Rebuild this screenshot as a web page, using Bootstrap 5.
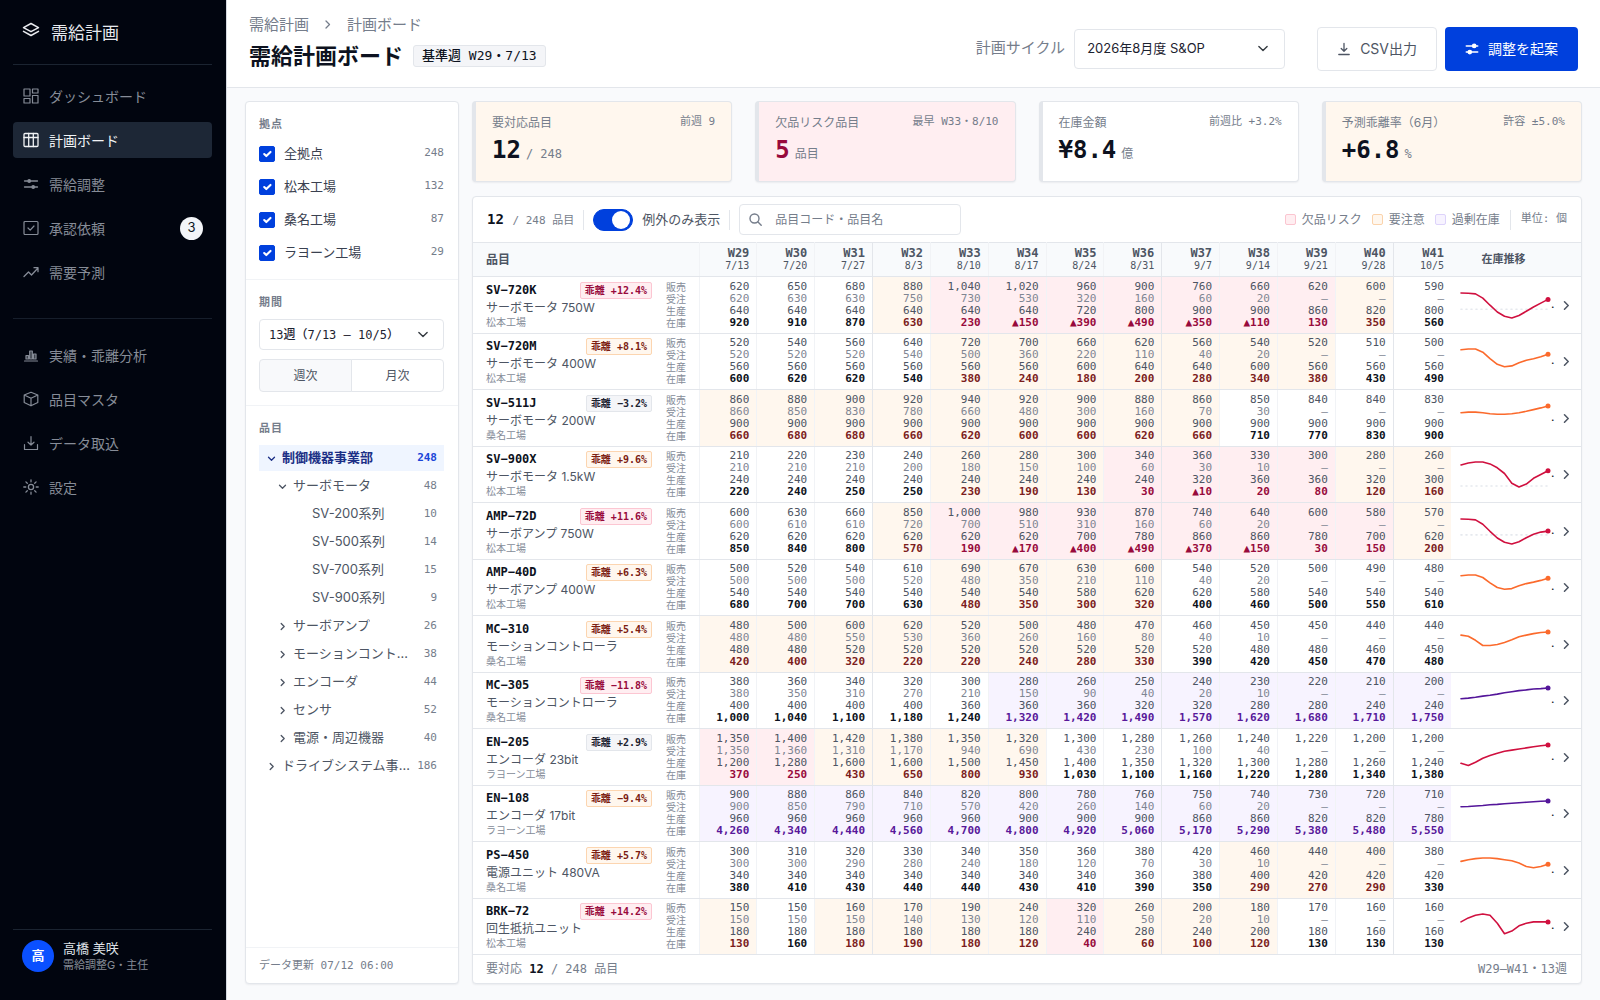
<!DOCTYPE html>
<html lang="ja">
<head>
    <meta charset="UTF-8">
    <meta name="viewport" content="width=device-width, initial-scale=1.0">
    <title>需給計画ボード</title>
    <link href="https://cdn.jsdelivr.net/npm/bootstrap@5.3.0/dist/css/bootstrap.min.css" rel="stylesheet">
    <style>
        :root {
            --line: #e3e6eb;
            --line-soft: #f1f3f6;
            --ink: #0d1220;
            --text: #4d5563;
            --muted: #757d8b;
            --blue: #0040dd;
            --risk-bg: #ffeef1;
            --warn-bg: #fff7ee;
            --over-bg: #f7f3ff;
            --sans: Inter, "Noto Sans CJK JP", sans-serif;
            --mono: "DejaVu Sans Mono", "Noto Sans CJK JP", monospace;
        }
        body { font-family: var(--sans); font-size: 13px; color: var(--text); background: #f9fafc; }
        svg { fill: none; stroke: currentColor; stroke-linecap: round; stroke-linejoin: round; flex: none; }
        .mono { font-family: var(--mono); }
        .fs-11 { font-size: 11px; }
        .fs-12 { font-size: 12px; }
        .muted { color: var(--muted); }
        .ink { color: var(--ink); }
        .panel { background: #fff; border: 1px solid var(--line); border-radius: 4px; box-shadow: 0 1px 2px rgba(15, 23, 42, .06); }

        /* sidebar */
        .side { width: 227px; background: #01050f; border-right: 1px solid #d5d9e0; padding: 0 14px 0 13px; color: #868c97; }
        .brand { height: 65px; padding: 4px 10px 0 9px; gap: 11px; font-size: 17px; color: #e8eaee; border-bottom: 1px solid #1b2431; }
        .brand svg { margin-bottom: 6px; }
        .side-nav { gap: 8px; padding: 13px 0 28px; }
        .side-nav + .side-nav { border-top: 1px solid #161e2b; padding-top: 18px; }
        .side-nav .nav-link { height: 36px; padding: 0 9px 0 10px; gap: 10px; font-size: 14px; color: inherit; border-radius: 4px; }
        .side-nav .nav-link.active { background: #1d2736; color: #f1f3f5; }
        .pending { width: 23px; height: 23px; font-size: 13px; background: #f3f5f8; color: #10151f; }
        .user { border-top: 1px solid #1b2431; padding: 9px 8px 27px 9px; gap: 9px; }
        .avatar { width: 32px; height: 32px; font-weight: 700; background: #0a50ff; color: #fff; }
        .user-name { line-height: 18px; color: #dfe2e7; }
        .user-role { font-size: 11px; line-height: 16px; }

        /* top bar */
        .topbar { height: 88px; background: #fff; border-bottom: 1px solid var(--line); padding: 10px 22px 0; }
        .page-title { padding-bottom: 12px; }
        .crumbs { font-size: 15px; line-height: 22px; gap: 16px; color: var(--muted); }
        .crumbs a { color: inherit; text-decoration: none; }
        .topbar h1 { font-size: 22px; line-height: 32px; font-weight: 700; color: var(--ink); }
        .title-row { gap: 10px; }
        .base-week { height: 22px; padding: 0 8px; font-size: 13px; font-weight: 500; line-height: 20px; background: #f4f5f8; border: 1px solid var(--line); border-radius: 3px; color: var(--ink); }
        .cycle-label { font-size: 15px; color: var(--muted); margin-right: 9px; }
        .form-select { border-color: var(--line); border-radius: 4px; color: #1c2230; background-size: 14px 11px; }
        .cycle { width: 211px; height: 40px; padding: 0 32px 0 12px; font-size: 13px; background-position: right 14px center; }
        .topbar .btn { height: 44px; padding: 0 19px; font-size: 14px; border-radius: 4px; gap: 9px; }
        .btn-export { background: #fff; border-color: var(--line); color: var(--text); }
        .btn-draft, .btn-draft:hover { background: var(--blue); color: #fff; }

        /* filters */
        .work { padding: 13px 18px 16px; gap: 13px; min-height: 0; }
        .filters { width: 214px; }
        .filters section { padding: 12px 14px 13px 13px; border-bottom: 1px solid var(--line-soft); }
        .filters section:first-child { padding-bottom: 10px; }
        .filters h2 { font-size: 11px; line-height: 20px; font-weight: 600; letter-spacing: 1px; color: var(--muted); margin: 0; }
        .site-list { margin-top: 3px; }
        .site { height: 33px; gap: 9px; }
        .form-check-input:checked { background-color: var(--blue); border-color: var(--blue); }
        .site .form-check-input { width: 16px; height: 16px; margin: 0; border-radius: 2px; float: none; }
        .site label { color: #3a4150; }
        .period { height: 31px; padding: 0 26px 0 9px; margin: 7px 0 9px; font-size: 12px; font-weight: 500; background-position: right 13px center; }
        .grain .btn { height: 33px; padding: 0; font-size: 12px; line-height: 31px; border-color: var(--line); border-radius: 4px; color: var(--text); background: #fff; }
        .grain .btn-check:checked + .btn { background: #f8f9fb; border-color: var(--line); color: var(--text); }
        .tree { gap: 2px; margin-top: 7px; }
        .tree button { height: 26px; padding: 0 7px 0 8px; border: 0; background: none; color: var(--text); text-align: left; }
        .tree .level-1 { padding-left: 19px; }
        .tree .level-2 { padding-left: 53px; }
        .tree .chosen { background: #eff5ff; color: #1b2f86; font-weight: 700; }
        .tree .chosen .tally { color: #1a45d8; }
        .tree svg { margin-right: 6px; }
        .tally { font-family: var(--mono); font-size: 11px; color: var(--muted); margin-left: 5px; }
        .updated { height: 35px; padding: 0 13px; line-height: 35px; }

        /* summary tiles */
        .board-side { gap: 14px; }
        .tiles { gap: 23px; }
        .tile { flex: 1; height: 81px; padding: 12px 16px 0; border-left: 4px solid var(--line); }
        .tile-value { font-family: var(--mono); font-size: 24px; line-height: 36px; font-weight: 700; color: var(--ink); }
        .tile-unit { font-size: 12px; font-weight: 400; color: var(--muted); margin-left: 5px; }
        .tone-warn { background: var(--warn-bg); }
        .tone-risk { background: var(--risk-bg); }
        .tone-risk .tile-value { color: #980a3c; }
        .tone-risk .tile-unit { color: var(--muted); }

        /* board */
        .tools { height: 45px; padding: 0 14px; }
        .tools .mono, .tools .search, .tools .form-switch, .rule { flex: none; }
        .rule { width: 1px; height: 20px; background: var(--line); }
        .tool-row { gap: 9px; }
        .total { font-size: 14px; font-weight: 700; color: var(--ink); margin-right: 2px; }
        .tools .form-switch { padding: 0; min-height: 0; gap: 9px; }
        .tools .form-switch .form-check-input { width: 40px; height: 22px; margin: 0; border-radius: 11px; float: none; background-size: 24px; background-position: right -1px center; }
        .tools .form-switch .form-check-input:not(:checked) { background-position: left -1px center; }
        .search { width: 222px; height: 31px; border: 1px solid var(--line); border-radius: 4px; padding: 0 9px; gap: 9px; }
        .search input { border: 0; padding: 0 4px; font-size: 12px; min-height: 0; background: none; box-shadow: none; }
        .search input::placeholder { color: var(--muted); }
        .legend-row { gap: 10px; }
        .legend-key { gap: 6px; }
        .swatch { width: 11px; height: 11px; border-radius: 2px; border: 1px solid; }
        .swatch-risk { background: var(--risk-bg); border-color: #fbc5d0; }
        .swatch-warn { background: var(--warn-bg); border-color: #fbd3ab; }
        .swatch-over { background: var(--over-bg); border-color: #ddd3fb; }
        .board-body { min-height: 0; }
        .plan-grid { table-layout: fixed; height: 100%; border-top: 1px solid var(--line); }
        .plan-grid th, .plan-grid td { padding: 0; vertical-align: middle; border-bottom: 1px solid var(--line); color: var(--text); }
        .plan-grid thead th { height: 34px; background: #f8fafc; font-weight: 600; }
        .col-item { width: 187px; }
        .col-kind { width: 39px; }
        .col-trend { width: 105px; }
        .col-open { width: 25px; }
        .plan-grid .week { padding-right: 7px; text-align: right; font-family: var(--mono); font-size: 11px; line-height: 12px; border-left: 1px solid var(--line-soft); }
        .plan-grid .month { border-left-color: var(--line); }
        .plan-grid thead .week { font-size: 12px; font-weight: 700; line-height: 13px; }
        .week small { display: block; font-size: 10px; font-weight: 400; line-height: 12px; }
        .plan-grid .item { padding: 0 8px 0 13px; font-weight: 400; }
        .code { font-size: 12px; line-height: 17px; font-weight: 700; color: var(--ink); }
        .item-name { font-size: 12px; line-height: 17px; }
        .item-site { font-size: 10px; line-height: 12px; color: #858c99; }
        .gap-tag { font-family: var(--mono); font-size: 10px; line-height: 15px; font-weight: 700; padding: 0 4px; border: 1px solid var(--line); border-radius: 2px; background: #f4f5f8; color: #1c2230; }
        .gap-risk { background: var(--risk-bg); border-color: #fcc6d2; color: #980a3c; }
        .gap-warn { background: var(--warn-bg); border-color: #fcd5b0; color: #7c1d12; }
        .plan-grid .kind { padding-left: 6px; font-size: 10px; line-height: 12px; color: #858c99; }
        .plan-grid td.risk { background: var(--risk-bg); }
        .plan-grid td.warn { background: var(--warn-bg); }
        .plan-grid td.over { background: var(--over-bg); }
        .orders { color: #7f8693; }
        .stock { font-weight: 700; color: var(--ink); }
        .risk .stock { color: #980a3c; }
        .warn .stock { color: #7c1d1d; }
        .over .stock { color: #58189a; }
        .plan-grid .trend { padding-left: 9px; color: var(--ink); white-space: nowrap; font-size: 12px; }
        .trend-risk { color: #d0103f; }
        .trend-warn { color: #fb6a2c; }
        .trend-over { color: #54169a; }
        .open-row { padding: 0 6px; border: 0; background: none; color: var(--text); line-height: 1; }
        .board-foot { height: 28px; padding: 0 14px 0 13px; }
    </style>
</head>
<body class="d-flex vh-100">

<aside class="side d-flex flex-column flex-shrink-0">
    <div class="brand d-flex align-items-center">
        <svg width="18" height="18" viewBox="0 0 18 18" stroke-width="1.5"><path d="M9 1.5 1.5 5.6 9 9.7l7.500-4.100zM1.500 9.300 9 13.500l7.500-4.200"/></svg>
        <span>需給計画</span>
    </div>
    <nav class="side-nav nav flex-column">
        <a class="nav-link d-flex align-items-center" href="#">
            <svg width="16" height="16" viewBox="0 0 16 16" stroke-width="1.2"><path d="M1 1h6v7H1zM9.500 1H15v4H9.500zM1 10.500h6V15H1zM9.500 7.500H15V15H9.500z"/></svg>
            ダッシュボード
        </a>
        <a class="nav-link active d-flex align-items-center" href="#" aria-current="page">
            <svg width="16" height="16" viewBox="0 0 16 16" stroke-width="1.300"><rect x="1" y="1.500" width="14" height="13" rx="1"/><path d="M1 5.500h14M5.700 1.500v13M10.300 1.500v13"/></svg>
            計画ボード
        </a>
        <a class="nav-link d-flex align-items-center" href="#">
            <svg width="16" height="16" viewBox="0 0 16 16" stroke-width="1.300"><path d="M1.500 5h3M8 5h6.500M1.500 11h7M12 11h2.500"/><circle cx="6.200" cy="5" r="1.300" fill="currentColor"/><circle cx="10.200" cy="11" r="1.300" fill="currentColor"/></svg>
            需給調整
        </a>
        <a class="nav-link d-flex align-items-center" href="#">
            <svg width="16" height="16" viewBox="0 0 16 16" stroke-width="1.200"><rect x="1" y="1.500" width="14" height="13" rx="1"/><path d="m5 8 2.200 2.200L11 6"/></svg>
            承認依頼
            <span class="pending rounded-circle d-flex align-items-center justify-content-center ms-auto">3</span>
        </a>
        <a class="nav-link d-flex align-items-center" href="#">
            <svg width="16" height="16" viewBox="0 0 16 16" stroke-width="1.300"><path d="m1 12.500 4.500-4.500 3 3L15 4M11 3.700h4v4"/></svg>
            需要予測
        </a>
    </nav>
    <nav class="side-nav nav flex-column">
        <a class="nav-link d-flex align-items-center" href="#">
            <svg width="16" height="16" viewBox="0 0 16 16" stroke-width="1.200"><path d="M1.500 14h13M3 8.500h2.500V12H3zM6.700 4h2.600v8H6.700zM10.500 7H13v5h-2.500z" fill="currentColor" fill-opacity=".4"/></svg>
            実績・乖離分析
        </a>
        <a class="nav-link d-flex align-items-center" href="#">
            <svg width="16" height="16" viewBox="0 0 16 16" stroke-width="1.200"><path d="M8 1.200 14.800 4v7.500L8 14.800l-6.800-3.300V4zM1.200 4 8 7.200 14.800 4M8 7.200v7.600"/></svg>
            品目マスタ
        </a>
        <a class="nav-link d-flex align-items-center" href="#">
            <svg width="16" height="16" viewBox="0 0 16 16" stroke-width="1.200"><path d="M8 1.500v8.500M5 7.200 8 10l3-2.800M1.500 9.500v5h13v-5"/></svg>
            データ取込
        </a>
        <a class="nav-link d-flex align-items-center" href="#">
            <svg width="16" height="16" viewBox="0 0 16 16" stroke-width="1.300"><circle cx="8" cy="8" r="2.600"/><path d="M8 .8v2M8 13.200v2M.8 8h2M13.200 8h2M2.900 2.900l1.400 1.400M11.700 11.700l1.400 1.400M2.900 13.100l1.400-1.400M11.700 4.300l1.400-1.400"/></svg>
            設定
        </a>
    </nav>
    <div class="user d-flex align-items-center mt-auto">
        <span class="avatar rounded-circle d-flex align-items-center justify-content-center">高</span>
        <div>
            <div class="user-name">高橋 美咲</div>
            <div class="user-role">需給調整G・主任</div>
        </div>
    </div>
</aside>

<main class="d-flex flex-column flex-grow-1 overflow-hidden">
    <header class="topbar d-flex align-items-center flex-shrink-0">
        <div class="page-title">
            <nav class="crumbs d-flex align-items-center" aria-label="パンくず">
                <a href="#">需給計画</a>
                <svg width="6" height="9" viewBox="0 0 6 9" stroke-width="1.300"><path d="m1 1 3.500 3.500L1 8"/></svg>
                <span>計画ボード</span>
            </nav>
            <div class="title-row d-flex align-items-center mt-1">
                <h1 class="mb-0">需給計画ボード</h1>
                <span class="base-week mono">基準週 W29・7/13</span>
            </div>
        </div>
        <div class="d-flex align-items-center ms-auto">
            <label class="cycle-label" for="cycle">計画サイクル</label>
            <select id="cycle" class="form-select cycle me-4">
                <option>2026年8月度 S&amp;OP</option>
            </select>
            <button type="button" class="btn btn-export d-flex align-items-center ms-2 me-2">
                <svg width="14" height="14" viewBox="0 0 14 14" stroke-width="1.300"><path d="M7 1.500v7.500M4.200 6.500 7 9.200l2.800-2.700M1.800 12.500h10.400"/></svg>
                CSV出力
            </button>
            <button type="button" class="btn btn-draft d-flex align-items-center">
                <svg width="14" height="14" viewBox="0 0 16 16" stroke-width="1.800"><path d="M1.500 4.500h7M13 4.500h1.500M1.500 11.500h2M8 11.500h6.500"/><circle cx="10.500" cy="4.500" r="1.800" fill="currentColor"/><circle cx="5.500" cy="11.500" r="1.800" fill="currentColor"/></svg>
                調整を起案
            </button>
        </div>
    </header>

    <div class="work d-flex flex-grow-1">
        <aside class="filters panel d-flex flex-column flex-shrink-0">
            <section>
                <h2>拠点</h2>
                <div id="sites" class="site-list"></div>
            </section>
            <section>
                <h2>期間</h2>
                <select class="form-select period mono" aria-label="期間">
                    <option>13週（7/13 – 10/5）</option>
                </select>
                <div class="btn-group grain d-flex" role="group" aria-label="表示単位">
                    <input type="radio" class="btn-check" name="grain" id="grain-week" checked>
                    <label class="btn w-50" for="grain-week">週次</label>
                    <input type="radio" class="btn-check" name="grain" id="grain-month">
                    <label class="btn w-50" for="grain-month">月次</label>
                </div>
            </section>
            <section class="flex-grow-1">
                <h2>品目</h2>
                <div id="tree" class="tree d-flex flex-column"></div>
            </section>
            <div class="updated mono fs-11 muted">データ更新 07/12 06:00</div>
        </aside>

        <div class="board-side d-flex flex-column flex-grow-1">
            <div class="tiles d-flex">
                <div class="tile panel tone-warn">
                    <div class="d-flex justify-content-between"><span class="fs-12 muted">要対応品目</span><span class="mono fs-11 muted">前週 9</span></div>
                    <div class="tile-value">12<span class="tile-unit">/ 248</span></div>
                </div>
                <div class="tile panel tone-risk">
                    <div class="d-flex justify-content-between"><span class="fs-12 muted">欠品リスク品目</span><span class="mono fs-11 muted">最早 W33・8/10</span></div>
                    <div class="tile-value">5<span class="tile-unit">品目</span></div>
                </div>
                <div class="tile panel">
                    <div class="d-flex justify-content-between"><span class="fs-12 muted">在庫金額</span><span class="mono fs-11 muted">前週比 +3.2%</span></div>
                    <div class="tile-value">¥8.4<span class="tile-unit">億</span></div>
                </div>
                <div class="tile panel tone-warn">
                    <div class="d-flex justify-content-between"><span class="fs-12 muted">予測乖離率（6月）</span><span class="mono fs-11 muted">許容 ±5.0%</span></div>
                    <div class="tile-value">+6.8<span class="tile-unit">%</span></div>
                </div>
            </div>

            <div class="panel d-flex flex-column flex-grow-1 board-body">
                <div class="tools tool-row d-flex align-items-center flex-shrink-0">
                    <div class="mono fs-11 muted"><span class="total">12</span> / 248 品目</div>
                    <span class="rule"></span>
                    <div class="form-check form-switch d-flex align-items-center mb-0">
                        <input class="form-check-input" type="checkbox" role="switch" id="only-exceptions" checked>
                        <label for="only-exceptions">例外のみ表示</label>
                    </div>
                    <span class="rule"></span>
                    <div class="search d-flex align-items-center">
                        <svg class="muted" width="13" height="13" viewBox="0 0 13 13" stroke-width="1.400"><circle cx="5.500" cy="5.500" r="4.500"/><path d="m9 9 3.200 3.200"/></svg>
                        <input type="search" class="form-control" placeholder="品目コード・品目名" aria-label="品目コード・品目名">
                    </div>
                    <div class="legend-row d-flex align-items-center ms-auto fs-12 muted">
                        <span class="legend-key d-flex align-items-center"><span class="swatch swatch-risk"></span>欠品リスク</span>
                        <span class="legend-key d-flex align-items-center"><span class="swatch swatch-warn"></span>要注意</span>
                        <span class="legend-key d-flex align-items-center"><span class="swatch swatch-over"></span>過剰在庫</span>
                        <span class="rule"></span>
                        <span class="mono fs-11">単位: 個</span>
                    </div>
                </div>
                <div class="flex-grow-1 board-body">
                    <table class="table plan-grid mb-0">
                        <colgroup id="cols"></colgroup>
                        <thead><tr id="head"></tr></thead>
                        <tbody id="rows"></tbody>
                    </table>
                </div>
                <div class="board-foot d-flex align-items-center justify-content-between mono fs-12 muted flex-shrink-0">
                    <span>要対応 <b class="ink">12</b> / 248 品目</span>
                    <span>W29–W41・13週</span>
                </div>
            </div>
        </div>
    </div>
</main>

<script src="https://cdn.jsdelivr.net/npm/bootstrap@5.3.0/dist/js/bootstrap.bundle.min.js"></script>
<script>
    const sites = [['全拠点', 248], ['松本工場', 132], ['桑名工場', 87], ['ラヨーン工場', 29]];

    // [level, name, count, state]
    const tree = [
        [0, '制御機器事業部', 248, 'open'],
        [1, 'サーボモータ', 48, 'open'],
        [2, 'SV-200系列', 10],
        [2, 'SV-500系列', 14],
        [2, 'SV-700系列', 15],
        [2, 'SV-900系列', 9],
        [1, 'サーボアンプ', 26, 'closed'],
        [1, 'モーションコントローラ', 38, 'closed'],
        [1, 'エンコーダ', 44, 'closed'],
        [1, 'センサ', 52, 'closed'],
        [1, '電源・周辺機器', 40, 'closed'],
        [0, 'ドライブシステム事業部', 186, 'closed']
    ];

    const dates = ['7/13', '7/20', '7/27', '8/3', '8/10', '8/17', '8/24', '8/31', '9/7', '9/14', '9/21', '9/28', '10/5'];
    const monthStarts = [3, 8, 12];

    // flags: one letter per week, r = shortage risk, w = warning, o = overstock
    const items = [
        { code: 'SV−720K', gap: '+12.4', name: 'サーボモータ 750W', site: '松本工場', flags: '---wrrrrrrrw-',
          sales: [620, 650, 680, 880, 1040, 1020, 960, 900, 760, 660, 620, 600, 590],
          orders: [620, 630, 630, 750, 730, 530, 320, 160, 60, 20],
          output: [640, 640, 640, 640, 640, 640, 720, 800, 900, 900, 860, 820, 800],
          stock: [920, 910, 870, 630, 230, -150, -390, -490, -350, -110, 130, 350, 560] },
        { code: 'SV−720M', gap: '+8.1', name: 'サーボモータ 400W', site: '松本工場', flags: '----wwwwwww--',
          sales: [520, 540, 560, 640, 720, 700, 660, 620, 560, 540, 520, 510, 500],
          orders: [520, 520, 520, 540, 500, 360, 220, 110, 40, 20],
          output: [560, 560, 560, 560, 560, 560, 600, 640, 640, 600, 560, 560, 560],
          stock: [600, 620, 620, 540, 380, 240, 180, 200, 280, 340, 380, 430, 490] },
        { code: 'SV−511J', gap: '−3.2', name: 'サーボモータ 200W', site: '桑名工場', flags: 'wwwwwwwww----',
          sales: [860, 880, 900, 920, 940, 920, 900, 880, 860, 850, 840, 840, 830],
          orders: [860, 850, 830, 780, 660, 480, 300, 160, 70, 30],
          output: [900, 900, 900, 900, 900, 900, 900, 900, 900, 900, 900, 900, 900],
          stock: [660, 680, 680, 660, 620, 600, 600, 620, 660, 710, 770, 830, 900] },
        { code: 'SV−900X', gap: '+9.6', name: 'サーボモータ 1.5kW', site: '松本工場', flags: '----wwwrrrrww',
          sales: [210, 220, 230, 240, 260, 280, 300, 340, 360, 330, 300, 280, 260],
          orders: [210, 210, 210, 200, 180, 150, 100, 60, 30, 10],
          output: [240, 240, 240, 240, 240, 240, 240, 240, 320, 360, 360, 320, 300],
          stock: [220, 240, 250, 250, 230, 190, 130, 30, -10, 20, 80, 120, 160] },
        { code: 'AMP−72D', gap: '+11.6', name: 'サーボアンプ 750W', site: '松本工場', flags: '---wrrrrrrrrw',
          sales: [600, 630, 660, 850, 1000, 980, 930, 870, 740, 640, 600, 580, 570],
          orders: [600, 610, 610, 720, 700, 510, 310, 160, 60, 20],
          output: [620, 620, 620, 620, 620, 620, 700, 780, 860, 860, 780, 700, 620],
          stock: [850, 840, 800, 570, 190, -170, -400, -490, -370, -150, 30, 150, 200] },
        { code: 'AMP−40D', gap: '+6.3', name: 'サーボアンプ 400W', site: '松本工場', flags: '----wwww-----',
          sales: [500, 520, 540, 610, 690, 670, 630, 600, 540, 520, 500, 490, 480],
          orders: [500, 500, 500, 520, 480, 350, 210, 110, 40, 20],
          output: [540, 540, 540, 540, 540, 540, 580, 620, 620, 580, 540, 540, 540],
          stock: [680, 700, 700, 630, 480, 350, 300, 320, 400, 460, 500, 550, 610] },
        { code: 'MC−310', gap: '+5.4', name: 'モーションコントローラ', site: '桑名工場', flags: 'wwwwwwww-----',
          sales: [480, 500, 600, 620, 520, 500, 480, 470, 460, 450, 450, 440, 440],
          orders: [480, 480, 550, 530, 360, 260, 160, 80, 40, 10],
          output: [480, 480, 520, 520, 520, 520, 520, 520, 520, 480, 480, 460, 450],
          stock: [420, 400, 320, 220, 220, 240, 280, 330, 390, 420, 450, 470, 480] },
        { code: 'MC−305', gap: '−11.8', name: 'モーションコントローラ', site: '桑名工場', flags: '-----oooooooo',
          sales: [380, 360, 340, 320, 300, 280, 260, 250, 240, 230, 220, 210, 200],
          orders: [380, 350, 310, 270, 210, 150, 90, 40, 20, 10],
          output: [400, 400, 400, 400, 360, 360, 360, 320, 320, 280, 280, 240, 240],
          stock: [1000, 1040, 1100, 1180, 1240, 1320, 1420, 1490, 1570, 1620, 1680, 1710, 1750] },
        { code: 'EN−205', gap: '+2.9', name: 'エンコーダ 23bit', site: 'ラヨーン工場', flags: 'rrwwww-------',
          sales: [1350, 1400, 1420, 1380, 1350, 1320, 1300, 1280, 1260, 1240, 1220, 1200, 1200],
          orders: [1350, 1360, 1310, 1170, 940, 690, 430, 230, 100, 40],
          output: [1200, 1280, 1600, 1600, 1500, 1450, 1400, 1350, 1320, 1300, 1280, 1260, 1240],
          stock: [370, 250, 430, 650, 800, 930, 1030, 1100, 1160, 1220, 1280, 1340, 1380] },
        { code: 'EN−108', gap: '−9.4', name: 'エンコーダ 17bit', site: 'ラヨーン工場', flags: 'ooooooooooooo',
          sales: [900, 880, 860, 840, 820, 800, 780, 760, 750, 740, 730, 720, 710],
          orders: [900, 850, 790, 710, 570, 420, 260, 140, 60, 20],
          output: [960, 960, 960, 960, 960, 900, 900, 900, 860, 860, 820, 820, 780],
          stock: [4260, 4340, 4440, 4560, 4700, 4800, 4920, 5060, 5170, 5290, 5380, 5480, 5550] },
        { code: 'PS−450', gap: '+5.7', name: '電源ユニット 480VA', site: '桑名工場', flags: '---------www-',
          sales: [300, 310, 320, 330, 340, 350, 360, 380, 420, 460, 440, 400, 380],
          orders: [300, 300, 290, 280, 240, 180, 120, 70, 30, 10],
          output: [340, 340, 340, 340, 340, 340, 340, 360, 380, 400, 420, 420, 420],
          stock: [380, 410, 430, 440, 440, 430, 410, 390, 350, 290, 270, 290, 330] },
        { code: 'BRK−72', gap: '+14.2', name: '回生抵抗ユニット', site: '松本工場', flags: 'w-wwwwrwww---',
          sales: [150, 150, 160, 170, 190, 240, 320, 260, 200, 180, 170, 160, 160],
          orders: [150, 150, 150, 140, 130, 120, 110, 50, 20, 10],
          output: [180, 180, 180, 180, 180, 180, 240, 280, 240, 200, 180, 160, 160],
          stock: [130, 160, 180, 190, 180, 120, 40, 60, 100, 120, 130, 130, 130] }
    ];

    const flagClass = { r: 'risk', w: 'warn', o: 'over', '-': '' };
    const fmt = n => n === undefined ? '–' : (n < 0 ? '▲' : '') + Math.abs(n).toLocaleString('en-US');
    const weekClass = i => 'week' + (monthStarts.includes(i) ? ' month' : '');

    function chevron(open) {
        const d = open ? 'M1.500 3.200l3 3L7.500 3.200' : 'M3.200 1.500l3 3-3 3';
        return `<svg width="9" height="9" viewBox="0 0 9 9" stroke-width="1.300"><path d="${d}"/></svg>`;
    }

    function gapClass(gap) {
        const size = Math.abs(parseFloat(gap.replace('−', '-')));
        return size >= 10 ? 'gap-risk' : size >= 5 ? 'gap-warn' : '';
    }

    function sparkline(item) {
        const max = Math.max(...item.stock);
        const min = Math.min(0, ...item.stock);
        const y = v => (5 + (max - v) / (max - min) * 25).toFixed(1);
        const points = item.stock.map((v, i) => `${(1 + i * 7.25).toFixed(1)},${y(v)}`);
        const tone = item.flags.includes('r') ? 'risk' : item.flags.includes('w') ? 'warn' : 'over';
        const zero = min < 0 ? `<path d="M1 ${y(0)}H88" stroke="#e6e9ee" stroke-dasharray="1 4"/>` : '';
        return `<svg class="trend-${tone}" width="91" height="34" viewBox="0 0 91 34" stroke-width="1.600">${zero}
            <polyline points="${points.join(' ')}"/>
            <circle cx="88" cy="${y(item.stock[12])}" r="2.500" fill="currentColor" stroke="none"/></svg>`;
    }

    document.getElementById('sites').innerHTML = sites.map(([name, count], i) => `
        <div class="site d-flex align-items-center">
            <input class="form-check-input" type="checkbox" id="site-${i}" checked>
            <label for="site-${i}">${name}</label>
            <span class="tally ms-auto">${count}</span>
        </div>`).join('');

    document.getElementById('tree').innerHTML = tree.map(([level, name, count, state], i) => `
        <button type="button" class="level-${level} d-flex align-items-center${i === 0 ? ' chosen' : ''}">
            ${state ? chevron(state === 'open') : ''}<span class="text-truncate">${name}</span>
            <span class="tally ms-auto ps-1">${count}</span>
        </button>`).join('');

    document.getElementById('cols').innerHTML =
        '<col class="col-item"><col class="col-kind">' + '<col>'.repeat(13) + '<col class="col-trend"><col class="col-open">';

    document.getElementById('head').innerHTML =
        '<th class="item fs-12 fw-bold" colspan="2">品目</th>' +
        dates.map((d, i) => `<th class="${weekClass(i)}">W${29 + i}<small>${d}</small></th>`).join('') +
        '<th class="fs-11 fw-bold text-center">在庫推移</th><th></th>';

    document.getElementById('rows').innerHTML = items.map(item => `
        <tr>
            <th class="item" scope="row">
                <div class="d-flex justify-content-between">
                    <span class="code mono">${item.code}</span>
                    <span class="gap-tag ${gapClass(item.gap)}">乖離 ${item.gap}%</span>
                </div>
                <div class="item-name">${item.name}</div>
                <div class="item-site">${item.site}</div>
            </th>
            <td class="kind">販売<br>受注<br>生産<br>在庫</td>
            ${dates.map((d, i) => `<td class="${weekClass(i)} ${flagClass[item.flags[i]]}">
                <div>${fmt(item.sales[i])}</div>
                <div class="orders">${fmt(item.orders[i])}</div>
                <div>${fmt(item.output[i])}</div>
                <div class="stock">${fmt(item.stock[i])}</div></td>`).join('')}
            <td class="trend">${sparkline(item)}.</td>
            <td><button type="button" class="open-row" aria-label="${item.code} の詳細">
                <svg width="9" height="9" viewBox="0 0 9 9" stroke-width="1.500"><path d="M2.500.800 6.200 4.500 2.500 8.200"/></svg>
            </button></td>
        </tr>`).join('');
</script>
</body>
</html>
